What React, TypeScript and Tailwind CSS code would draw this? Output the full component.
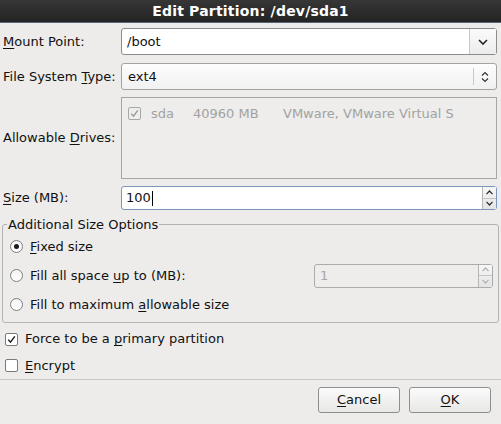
import React from 'react';

const font = { fontFamily: '"DejaVu Sans", "Noto Sans", sans-serif' };

// underlined mnemonic letter
const U = ({ children }: { children: React.ReactNode }) => (
  <span className="underline decoration-1 underline-offset-[2px]">{children}</span>
);

function CheckBox({ checked, disabled }: { checked?: boolean; disabled?: boolean }) {
  const stroke = disabled ? '#9a9a9a' : '#1a1a1a';
  return (
    <span
      className={`flex h-[13px] w-[13px] shrink-0 items-center justify-center rounded-[2px] border ${
        disabled ? 'border-[#a8a8a8] bg-[#eeeeec]' : 'border-[#7a7a7a] bg-white'
      }`}
    >
      {checked && (
        <svg width="9" height="9" viewBox="0 0 9 9">
          <path d="M1.2 4.6 L3.5 7.2 L7.8 1.4" fill="none" stroke={stroke} strokeWidth="1.4" />
        </svg>
      )}
    </span>
  );
}

function Radio({ checked }: { checked?: boolean }) {
  return (
    <span className="flex h-[13px] w-[13px] shrink-0 items-center justify-center rounded-full border border-[#7f7f7f] bg-gradient-to-b from-[#f4f4f4] to-white">
      {checked && <span className="h-[5px] w-[5px] rounded-full bg-[#1a1a1a]" />}
    </span>
  );
}

function SpinArrows({ disabled }: { disabled?: boolean }) {
  const c = disabled ? '#b0b0b0' : '#2a2a2a';
  return (
    <div className="flex w-[14px] flex-col border-l border-[#b5b5b5] bg-gradient-to-b from-[#f7f7f7] to-[#e4e4e4]">
      <div className="flex flex-1 items-center justify-center border-b border-[#c4c4c4]">
        <svg width="7" height="5" viewBox="0 0 7 5">
          <path d="M0.5 4.2 L3.5 1 L6.5 4.2" fill="none" stroke={c} strokeWidth="1.2" />
        </svg>
      </div>
      <div className="flex flex-1 items-center justify-center">
        <svg width="7" height="5" viewBox="0 0 7 5">
          <path d="M0.5 0.8 L3.5 4 L6.5 0.8" fill="none" stroke={c} strokeWidth="1.2" />
        </svg>
      </div>
    </div>
  );
}

export default function App() {
  return (
    <div className="h-[424px] w-[501px] overflow-hidden bg-[#edeceb] text-[13px] text-[#111]" style={font}>
      <div className="flex h-[23px] items-center justify-center border-b border-[#56657a] bg-gradient-to-b from-[#363636] to-[#242424]">
        <span className="text-[14px] font-bold tracking-[0.2px] text-white">Edit Partition: /dev/sda1</span>
      </div>

      <div className="grid grid-cols-[121px_1fr] pr-[4px]">
        <div className="mt-[5px] flex items-center pl-[3px]">
          <span><U>M</U>ount Point:</span>
        </div>
        <div className="mt-[5px] flex h-[27px] rounded-[3px] border border-[#8c8c8c] bg-white">
          <div className="flex flex-1 items-center pl-[5px]">/boot</div>
          <div className="flex w-[27px] items-center justify-center border-l border-[#c6c6c6] bg-gradient-to-b from-[#fbfbfb] to-[#ececec]">
            <svg width="10" height="6" viewBox="0 0 10 6">
              <path d="M1 1 L5 5 L9 1" fill="none" stroke="#222" strokeWidth="1.6" />
            </svg>
          </div>
        </div>

        <div className="mt-[8px] flex items-center pl-[3px]">
          <span>File System <U>T</U>ype:</span>
        </div>
        <div className="mt-[8px] flex h-[27px] rounded-[3px] border border-[#a3a3a3] bg-gradient-to-b from-[#fdfdfd] to-[#f1f1f1]">
          <div className="flex flex-1 items-center pl-[6px]">ext4</div>
          <div className="my-[4px] border-l border-[#c8c8c8]" />
          <div className="flex w-[22px] items-center justify-center">
            <svg width="8" height="12" viewBox="0 0 8 12">
              <path d="M1 4.5 L4 1.5 L7 4.5 M1 7.5 L4 10.5 L7 7.5" fill="none" stroke="#333" strokeWidth="1.2" />
            </svg>
          </div>
        </div>

        <div className="mt-[7px] flex items-center pl-[3px]">
          <span>Allowable <U>D</U>rives:</span>
        </div>
        <div className="mt-[7px] h-[82px] border border-[#a6a6a6] bg-[#eeedec] px-[6px] pt-[6px] text-[#a2a2a2]">
          <div className="flex items-center">
            <CheckBox checked disabled />
            <span className="ml-[10px] w-[42px]">sda</span>
            <span className="w-[90px]">40960 MB</span>
            <span className="whitespace-nowrap">VMware, VMware Virtual S</span>
          </div>
        </div>

        <div className="mt-[7px] flex items-center pl-[3px]">
          <span><U>S</U>ize (MB):</span>
        </div>
        <div className="mt-[7px] flex h-[24px] rounded-[3px] border border-[#7b96bb] bg-white">
          <div className="flex flex-1 items-center pl-[4px]">
            100<span className="ml-[1px] h-[15px] w-px bg-black" />
          </div>
          <SpinArrows />
        </div>
      </div>

      <fieldset className="mx-[2px] mt-[7px] h-[106px] rounded-[3px] border border-[#b3b3b3] px-[7px] pr-[5px]">
        <legend className="-ml-[3px] px-[1px] leading-[15px]">Additional Size Options</legend>
        <div className="flex h-[29px] items-center gap-[7px]">
          <Radio checked />
          <span><U>F</U>ixed size</span>
        </div>
        <div className="flex h-[29px] items-center gap-[7px]">
          <Radio />
          <span>Fill all space <U>u</U>p to (MB):</span>
          <div className="ml-auto flex h-[24px] w-[179px] rounded-[3px] border border-[#ababab] bg-[#eeedec]">
            <div className="flex flex-1 items-center pl-[5px] text-[#a6a6a6]">1</div>
            <SpinArrows disabled />
          </div>
        </div>
        <div className="flex h-[29px] items-center gap-[7px]">
          <Radio />
          <span>Fill to maximum <U>a</U>llowable size</span>
        </div>
      </fieldset>

      <div className="mt-[3px] flex h-[26px] items-center gap-[7px] pl-[5px]">
        <CheckBox checked />
        <span>Force to be a <U>p</U>rimary partition</span>
      </div>
      <div className="flex h-[27px] items-center gap-[7px] pl-[5px]">
        <CheckBox />
        <span><U>E</U>ncrypt</span>
      </div>
      <div className="border-t border-[#c8c8c6]" />

      <div className="mt-[7px] flex justify-end gap-[9px] pr-[10px]">
        <button className="h-[26px] w-[82px] rounded-[3px] border border-[#8e8e8e] bg-gradient-to-b from-[#fbfbfb] to-[#e7e7e6]">
          <U>C</U>ancel
        </button>
        <button className="h-[26px] w-[82px] rounded-[3px] border border-[#8e8e8e] bg-gradient-to-b from-[#fbfbfb] to-[#e7e7e6]">
          <U>O</U>K
        </button>
      </div>
    </div>
  );
}
